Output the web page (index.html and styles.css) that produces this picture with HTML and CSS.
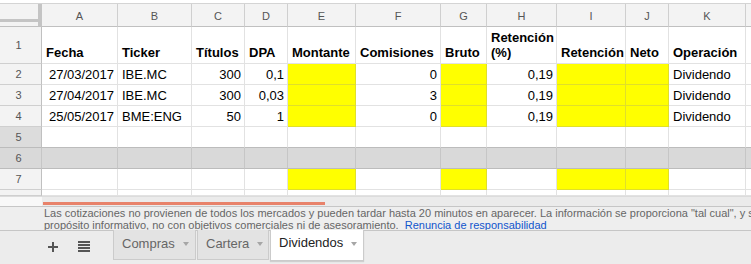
FILE: index.html
```html
<!DOCTYPE html>
<html lang="es">
<head>
<meta charset="utf-8">
<title>Dividendos</title>
<link rel="stylesheet" href="styles.css">
</head>
<body>
<div class="page">
  <div class="topstrip"></div>
  <div class="grid">
    <!-- column headers -->
    <div class="corner"></div>
    <div class="hd">A</div><div class="hd">B</div><div class="hd">C</div><div class="hd">D</div><div class="hd">E</div><div class="hd">F</div><div class="hd">G</div><div class="hd">H</div><div class="hd">I</div><div class="hd">J</div><div class="hd">K</div><div class="hd"></div>
    <!-- row 1 -->
    <div class="rh mid">1</div>
    <div class="c b">Fecha</div><div class="c b">Ticker</div><div class="c b">Títulos</div><div class="c b">DPA</div><div class="c b">Montante</div><div class="c b">Comisiones</div><div class="c b">Bruto</div><div class="c b">Retención<br>(%)</div><div class="c b">Retención</div><div class="c b">Neto</div><div class="c b">Operación</div><div class="c"></div>
    <!-- row 2 -->
    <div class="rh">2</div>
    <div class="c r">27/03/2017</div><div class="c">IBE.MC</div><div class="c r">300</div><div class="c r">0,1</div><div class="c y"></div><div class="c r">0</div><div class="c y"></div><div class="c r">0,19</div><div class="c y"></div><div class="c y"></div><div class="c">Dividendo</div><div class="c"></div>
    <!-- row 3 -->
    <div class="rh">3</div>
    <div class="c r">27/04/2017</div><div class="c">IBE.MC</div><div class="c r">300</div><div class="c r">0,03</div><div class="c y"></div><div class="c r">3</div><div class="c y"></div><div class="c r">0,19</div><div class="c y"></div><div class="c y"></div><div class="c">Dividendo</div><div class="c"></div>
    <!-- row 4 -->
    <div class="rh">4</div>
    <div class="c r">25/05/2017</div><div class="c">BME:ENG</div><div class="c r">50</div><div class="c r">1</div><div class="c y"></div><div class="c r">0</div><div class="c y"></div><div class="c r">0,19</div><div class="c y"></div><div class="c y"></div><div class="c">Dividendo</div><div class="c"></div>
    <!-- row 5 -->
    <div class="rh dark">5</div>
    <div class="c"></div><div class="c"></div><div class="c"></div><div class="c"></div><div class="c"></div><div class="c"></div><div class="c"></div><div class="c"></div><div class="c"></div><div class="c"></div><div class="c"></div><div class="c"></div>
    <!-- row 6 -->
    <div class="rh dark sel">6</div>
    <div class="c sel"></div><div class="c sel"></div><div class="c sel"></div><div class="c sel"></div><div class="c sel"></div><div class="c sel"></div><div class="c sel"></div><div class="c sel"></div><div class="c sel"></div><div class="c sel"></div><div class="c sel"></div><div class="c sel"></div>
    <!-- row 7 -->
    <div class="rh">7</div>
    <div class="c"></div><div class="c"></div><div class="c"></div><div class="c"></div><div class="c y"></div><div class="c"></div><div class="c y"></div><div class="c"></div><div class="c y"></div><div class="c y"></div><div class="c"></div><div class="c"></div>
    <!-- row 8 partial -->
    <div class="rh"></div>
    <div class="c"></div><div class="c"></div><div class="c"></div><div class="c"></div><div class="c"></div><div class="c"></div><div class="c"></div><div class="c"></div><div class="c"></div><div class="c"></div><div class="c"></div><div class="c"></div>
  </div>
  <div class="scroll">
    <div class="scroll-left"></div>
    <div class="scroll-track"><div class="scroll-thumb"></div></div>
  </div>
  <div class="notice">
    <div class="line">Las cotizaciones no provienen de todos los mercados y pueden tardar hasta 20 minutos en aparecer. La información se proporciona "tal cual", y solo tiene un</div>
    <div class="line">propósito informativo, no con objetivos comerciales ni de asesoramiento.&nbsp; <a class="link" href="#">Renuncia de responsabilidad</a></div>
  </div>
  <div class="tabbar">
    <div class="tool add">
      <svg width="12" height="12" viewBox="0 0 12 12"><path d="M6 1v10M1 6h10" stroke="#555" stroke-width="2" fill="none"/></svg>
    </div>
    <div class="tool list">
      <svg width="12" height="11" viewBox="0 0 12 11"><path d="M0 1h12M0 4h12M0 7h12M0 10h12" stroke="#555" stroke-width="2" fill="none"/></svg>
    </div>
    <div class="tabs">
      <div class="tab t1"><span>Compras</span><i class="arrow"></i></div>
      <div class="tab t2"><span>Cartera</span><i class="arrow"></i></div>
      <div class="tab active"><span>Dividendos</span><i class="arrow"></i></div>
    </div>
  </div>
</div>
</body>
</html>
```
FILE: styles.css
```css
* { box-sizing: border-box; }
html, body {
  margin: 0;
  padding: 0;
  width: 751px;
  height: 264px;
  overflow: hidden;
  background: #ececec;
}
body {
  font-family: "Liberation Sans", Arial, sans-serif;
  color: #000;
}
.page {
  width: 751px;
  height: 264px;
  overflow: hidden;
  display: flex;
  flex-direction: column;
}
.topstrip {
  height: 4px;
  background: #fff;
  border-bottom: 1px solid #d4d4d4;
}
.grid {
  display: grid;
  grid-template-columns: 42px 76px 74px 53px 43px 68px 85px 46px 70px 69px 43px 77px 40px;
  grid-template-rows: 23px 37px 21px 21px 21px 21px 21px 21px 6px;
  width: 791px;
  background: #fff;
}
.corner {
  background: #f3f3f3;
  border-right: 4px solid #c4c4c4;
  border-bottom: 1px solid #c0c0c0;
  box-shadow: inset 0 -4px 0 #f3f3f3, inset 0 -7px 0 #c4c4c4;
}
.hd {
  background: #f3f3f3;
  border-right: 1px solid #cfcfcf;
  border-bottom: 1px solid #c0c0c0;
  color: #555;
  font-size: 11px;
  display: flex;
  align-items: center;
  justify-content: center;
  padding-top: 1px;
}
.rh {
  background: #f3f3f3;
  border-right: 1px solid #c0c0c0;
  border-bottom: 1px solid #cfcfcf;
  color: #555;
  font-size: 11px;
  display: flex;
  align-items: center;
  justify-content: center;
  padding-right: 4px;
}
.rh.dark { background: #dcdcdc; }
.c {
  border-right: 1px solid #e2e2e2;
  border-bottom: 1px solid #e2e2e2;
  font-size: 13px;
  line-height: 15px;
  padding: 0 3px 2px 4px;
  display: flex;
  align-items: flex-end;
  white-space: nowrap;
  overflow: hidden;
}
.c.r { justify-content: flex-end; }
.c.b { font-weight: bold; padding-bottom: 3px; }
.c.y {
  background: #ffff00;
  border-right-color: #e0df2a;
  border-bottom-color: #e0df2a;
}
.sel {
  background: #d9d9d9 !important;
  border-bottom-color: #bcbcbc !important;
  border-right-color: #c6c6c6 !important;
}
.grid > :nth-child(n+66):nth-child(-n+78) {
  border-bottom-color: #bcbcbc;
}
.grid > :nth-child(n+79):nth-child(-n+91) {
  border-bottom-color: #bcbcbc;
}
.grid > .rh:nth-child(n+66):nth-child(-n+78) { border-bottom-color: #bcbcbc; }
.scroll {
  display: flex;
  height: 10px;
}
.scroll-left {
  width: 42px;
  background: #f8f8f8;
  border-top: 1px solid #dcdcdc;
}
.scroll-track {
  flex: 1;
  background: #ebebeb;
  border-top: 1px solid #dcdcdc;
  display: flex;
  align-items: flex-end;
  padding-left: 1px;
}
.scroll-thumb {
  width: 282px;
  height: 3px;
  margin-bottom: 1px;
  background: #e8826a;
}
.notice {
  height: 25px;
  background: #eeeeee;
  border-top: 1px solid #c6c6c6;
  border-bottom: 1px solid #c6c6c6;
  padding: 1px 0 0 44px;
  font-size: 11px;
  line-height: 11.5px;
  color: #666;
  white-space: nowrap;
  overflow: hidden;
}
.link {
  color: #1155cc;
  text-decoration: none;
}
.tabbar {
  flex: 1;
  background: #ececec;
  display: flex;
  align-items: flex-start;
}
.tool {
  display: flex;
  align-items: center;
  justify-content: center;
  height: 31px;
}
.add { width: 12px; margin-left: 47px; }
.list { width: 12px; margin-left: 19px; }
.tabs {
  display: flex;
  margin-left: 23px;
  margin-top: -1px;
}
.tab {
  height: 30px;
  display: flex;
  align-items: center;
  font-size: 13px;
  color: #666;
  background: #e3e3e3;
  border: 1px solid #cbcbcb;
  border-top: none;
  padding: 0 0 3px 8px;
  margin-right: 1px;
}
.t1 { width: 83px; }
.t2 { width: 72px; }
.tab .arrow {
  width: 0;
  height: 0;
  border-left: 3.5px solid transparent;
  border-right: 3.5px solid transparent;
  border-top: 4px solid #a6a6a6;
  margin-left: 8px;
  margin-top: 2px;
}
.tab.active {
  width: 94px;
  background: #fff;
  color: #222;
  height: 31px;
  margin-top: 0;
  padding-bottom: 5px;
  box-shadow: 0 1px 1px rgba(0,0,0,0.12);
}
```
